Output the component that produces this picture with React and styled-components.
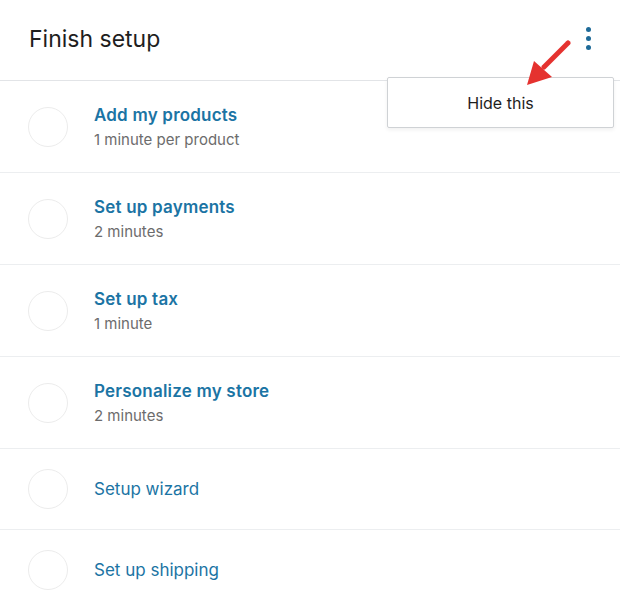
import React from 'react';
import styled, { createGlobalStyle } from 'styled-components';

const GlobalStyle = createGlobalStyle`
  body {
    margin: 0;
    background: #fff;
    font-family: Inter, "Liberation Sans", Arial, sans-serif;
  }
`;

const tasks = [
  { title: 'Add my products', time: '1 minute per product' },
  { title: 'Set up payments', time: '2 minutes' },
  { title: 'Set up tax', time: '1 minute' },
  { title: 'Personalize my store', time: '2 minutes' },
  { title: 'Setup wizard' },
  { title: 'Set up shipping' },
];

const App = () => {
  return (
    <>
      <GlobalStyle />
      <Card>
        <Header>
          <Title>Finish setup</Title>
          <MenuButton aria-label="More">
            <Dot />
            <Dot />
            <Dot />
          </MenuButton>
        </Header>
        <List>
          {tasks.map((t) => (
            <Row key={t.title} $short={!t.time}>
              <Check />
              <Text>
                <TaskTitle $bold={!!t.time}>{t.title}</TaskTitle>
                {t.time && <Time>{t.time}</Time>}
              </Text>
            </Row>
          ))}
        </List>
        <Popover>Hide this</Popover>
        <Arrow width="60" height="60" viewBox="0 0 60 60">
          <line x1="48" y1="3" x2="24" y2="27" stroke="#e5322f" strokeWidth="5" strokeLinecap="round" />
          <polygon points="7,45 14,21 32,37" fill="#e5322f" />
        </Arrow>
      </Card>
    </>
  );
};

export default App;

const Card = styled.div`
  position: relative;
  width: 620px;
  height: 596px;
  overflow: hidden;
  background: #fff;
`;

const Header = styled.div`
  height: 81px;
  display: flex;
  align-items: center;
  justify-content: space-between;
  padding: 0 29px 0 29px;
  box-sizing: border-box;
  border-bottom: 1px solid #e2e4e7;
`;

const Title = styled.h2`
  margin: 0;
  font-family: Inter, sans-serif;
  font-weight: 400;
  font-size: 23px;
  color: #1e1e1e;
  margin-top: -2px;
`;

const MenuButton = styled.div`
  display: flex;
  flex-direction: column;
  gap: 4px;
  margin-top: -4px;
`;

const Dot = styled.span`
  width: 5px;
  height: 5px;
  border-radius: 50%;
  background: #1e6a98;
`;

const List = styled.div`
  display: flex;
  flex-direction: column;
`;

const Row = styled.div`
  height: ${(p) => (p.$short ? 80 : 91)}px;
  display: flex;
  align-items: center;
  gap: 26px;
  padding-left: 28px;
  border-bottom: 1px solid #eceef0;
`;

const Check = styled.div`
  width: 38px;
  height: 38px;
  border-radius: 50%;
  border: 1px solid #ececec;
  flex-shrink: 0;
`;

const Text = styled.div`
  display: flex;
  flex-direction: column;
  gap: 5px;
`;

const TaskTitle = styled.span`
  font-family: Inter, sans-serif;
  font-size: 17px;
  font-weight: ${(p) => (p.$bold ? 600 : 400)};
  letter-spacing: ${(p) => (p.$bold ? '0.2px' : '0')};
  color: #1b74a4;
`;

const Time = styled.span`
  font-family: Inter, sans-serif;
  font-size: 15px;
  color: #6c6c6c;
`;

const Popover = styled.div`
  position: absolute;
  left: 387px;
  top: 77px;
  width: 227px;
  height: 51px;
  box-sizing: border-box;
  border: 1px solid #cfd2d5;
  border-radius: 2px;
  background: #fff;
  box-shadow: 0 2px 4px rgba(0, 0, 0, 0.06);
  display: flex;
  align-items: center;
  justify-content: center;
  font-family: Inter, sans-serif;
  font-size: 16px;
  color: #1e1e1e;
`;

const Arrow = styled.svg`
  position: absolute;
  left: 520px;
  top: 40px;
`;
